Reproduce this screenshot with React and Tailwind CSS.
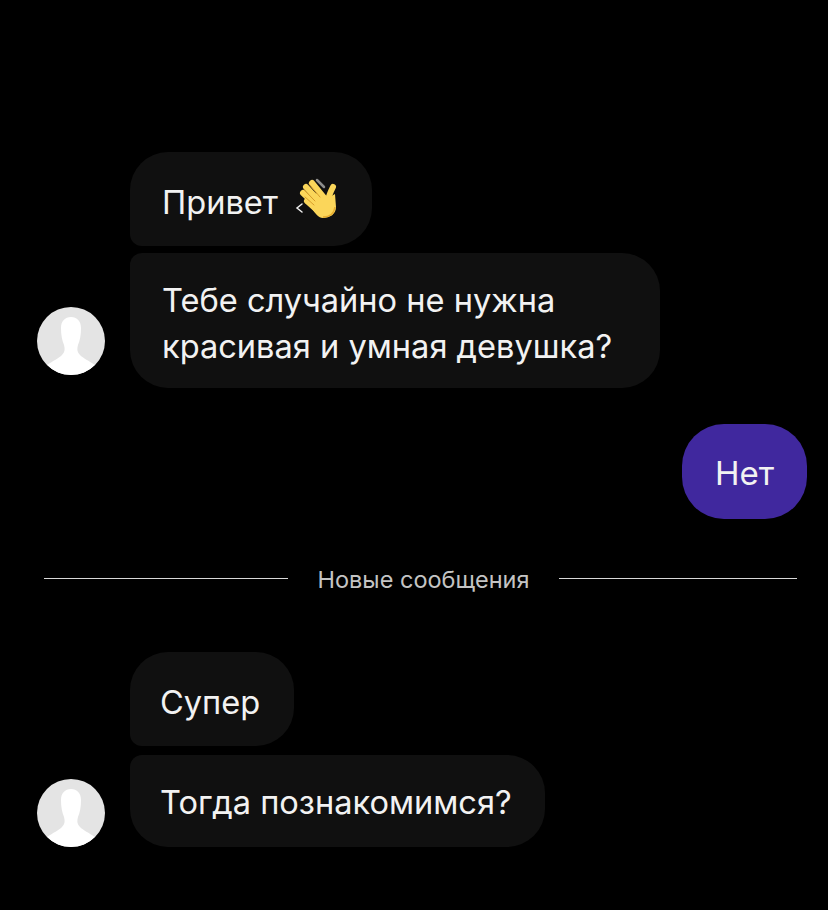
const font = { fontFamily: 'Inter, "Liberation Sans", sans-serif' }

function Avatar() {
  return (
    <div className="w-[68px] h-[68px] rounded-full bg-[#e4e4e4] overflow-hidden shrink-0">
      <svg viewBox="0 0 68 68" className="w-full h-full">
        <path d="M34 10c-6 0-10 4-10 11 0 7 1 12 3 17 1 4 1 7-2 10-3 3-9 6-15 10 6 7 15 10 24 10s18-3 24-10c-6-4-12-7-15-10-3-3-3-6-2-10 2-5 3-10 3-17 0-7-4-11-10-11z" fill="#ffffff" />
      </svg>
    </div>
  )
}

function WaveEmoji() {
  return (
    <svg viewBox="0 0 44 44" className="w-[44px] h-[44px] ml-[17px] -mt-[7px] shrink-0">
      <g stroke="#fbd65a" strokeWidth="6" strokeLinecap="round">
        <path d="M17 7l13 16" />
        <path d="M11 11l14 15" />
        <path d="M8 17l14 13" />
        <path d="M12 25l10 9" />
        <path d="M38 11c-2 4-4 8-5 13" />
      </g>
      <path d="M14 28L24 14l9 8 7-4 1 13c0 7-6 11-13 11-5 0-9-6-14-14z" fill="#fbd65a" />
      <g stroke="#d99e2b" strokeWidth="1" strokeLinecap="round">
        <path d="M14 8l11 13" />
        <path d="M9 14l11 11" />
        <path d="M10 21l9 8" />
      </g>
      <path d="M28 41c6 0 11-3 12-10" stroke="#e8ad2e" strokeWidth="1.5" fill="none" />
      <path d="M22 4l7 7" stroke="#8c8c8c" strokeWidth="2.5" strokeLinecap="round" />
      <path d="M7 28l-5 4 5 4" stroke="#efefef" strokeWidth="1.5" fill="none" strokeLinecap="round" />
    </svg>
  )
}

function Bubble({ className, children }) {
  return (
    <div className={`bg-[#101010] text-[#f2f2f2] text-[32.6px] leading-[46px] ${className}`}>
      {children}
    </div>
  )
}

export default function App() {
  return (
    <div className="w-[828px] h-[910px] bg-black overflow-hidden pt-[152px]" style={font}>
      {/* First group */}
      <div className="pl-[130px]">
        <Bubble className="w-[242px] h-[94px] pl-[32px] pt-[5px] rounded-[38px] rounded-bl-[12px] flex items-center">
          <span>Привет</span>
          <WaveEmoji />
        </Bubble>
      </div>
      <div className="flex items-end pl-[37px] mt-[7px]">
        <div className="mb-[13px]">
          <Avatar />
        </div>
        <Bubble className="ml-[25px] w-[530px] h-[135px] pl-[32px] pt-[5px] rounded-[38px] rounded-tl-[12px] flex flex-col justify-center">
          <div>Тебе случайно не нужна</div>
          <div>красивая и умная девушка?</div>
        </Bubble>
      </div>

      {/* Own reply */}
      <div className="flex justify-end pr-[21px] mt-[36px]">
        <div className="w-[125px] h-[95px] pt-[5px] rounded-[42px] bg-[#40289e] text-[#f2f2f2] text-[33px] flex items-center justify-center">
          Нет
        </div>
      </div>

      {/* Divider */}
      <div className="flex items-center pl-[44px] pr-[31px] mt-[48px] h-[22px]">
        <div className="w-[244px] h-px bg-[#d8d8d8]" />
        <div className="flex-1 text-center text-[23.5px] text-[#c4c4c4] leading-[22px] pt-[4px]">Новые сообщения</div>
        <div className="w-[238px] h-px bg-[#d8d8d8]" />
      </div>

      {/* Second group */}
      <div className="pl-[130px] mt-[63px]">
        <Bubble className="w-[164px] h-[94px] pl-[30px] pt-[5px] rounded-[38px] rounded-bl-[12px] flex items-center">
          Супер
        </Bubble>
      </div>
      <div className="flex items-end pl-[37px] mt-[9px]">
        <Avatar />
        <Bubble className="ml-[25px] w-[415px] h-[92px] pl-[30px] pt-[2px] rounded-[38px] rounded-tl-[12px] flex items-center">
          Тогда познакомимся?
        </Bubble>
      </div>
    </div>
  )
}
